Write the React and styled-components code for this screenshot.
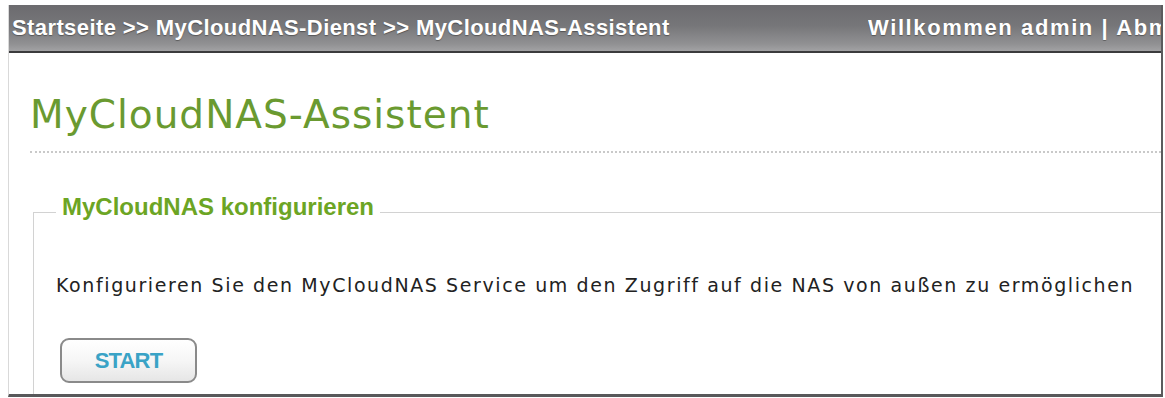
import styled, { createGlobalStyle } from "styled-components";

const GlobalStyle = createGlobalStyle`
  html, body {
    margin: 0;
    padding: 0;
    background: #fff;
  }
  body {
    font-family: "Liberation Sans", Arial, sans-serif;
  }
`;

const Frame = styled.div`
  box-sizing: border-box;
  margin: 5px 0 0 8px;
  width: 1155px;
  height: 392px;
  border-left: 1px solid #d9d9d9;
  border-right: 2px solid #5b5b5d;
  border-bottom: 3px solid #58585a;
  overflow: hidden;
  background: #fff;
`;

const TopBar = styled.div`
  display: flex;
  align-items: center;
  justify-content: space-between;
  height: 46px;
  padding-left: 3px;
  border-bottom: 2px solid #3b3b3d;
  background: linear-gradient(#6c6b6f, #767679 45%, #919193 85%, #a2a2a4);
  color: #fff;
  font-weight: bold;
  font-size: 22px;
  letter-spacing: 0.4px;
  white-space: nowrap;
  overflow: hidden;
  text-shadow: 0 1px 1px rgba(0, 0, 0, 0.35);
`;

const Crumbs = styled.div`
  flex-shrink: 0;
`;

const UserArea = styled.div`
  flex-shrink: 0;
  width: 293px;
  overflow: hidden;
  letter-spacing: 1.6px;
`;

const Title = styled.h1`
  margin: 39px 0 0 21px;
  font-family: "DejaVu Sans", Verdana, sans-serif;
  font-weight: normal;
  font-size: 39px;
  line-height: 46px;
  letter-spacing: 1px;
  color: #6a9a30;
`;

const Divider = styled.div`
  margin: 13px 0 0 21px;
  border-top: 2px dotted #c9c9c9;
`;

const Group = styled.fieldset`
  margin: 40px -60px 0 24px;
  padding: 0 0 60px 22px;
  border: 1px solid #d2d2d2;
  min-width: 0;
`;

const Legend = styled.legend`
  padding: 0 6px 10px;
  font-weight: bold;
  font-size: 24px;
  line-height: 28px;
  color: #6ca524;
`;

const Description = styled.p`
  margin: 42px 0 0;
  font-family: "DejaVu Sans", Verdana, sans-serif;
  font-size: 19px;
  line-height: 24px;
  letter-spacing: 1.6px;
  color: #222;
  white-space: nowrap;
`;

const StartButton = styled.button`
  display: block;
  margin: 41px 0 0 4px;
  width: 137px;
  height: 45px;
  border: 2px solid #8a8a8a;
  border-radius: 9px;
  background: linear-gradient(#ffffff, #f6f6f6 50%, #e6e6e6);
  color: #3aa3c6;
  font-family: "Liberation Sans", Arial, sans-serif;
  font-weight: bold;
  font-size: 22px;
  letter-spacing: -0.8px;
  cursor: pointer;
`;

export default function App() {
  return (
    <>
      <GlobalStyle />
      <Frame>
        <TopBar>
          <Crumbs>Startseite &gt;&gt; MyCloudNAS-Dienst &gt;&gt; MyCloudNAS-Assistent</Crumbs>
          <UserArea>Willkommen admin | Abmelden</UserArea>
        </TopBar>
        <Title>MyCloudNAS-Assistent</Title>
        <Divider />
        <Group>
          <Legend>MyCloudNAS konfigurieren</Legend>
          <Description>
            Konfigurieren Sie den MyCloudNAS Service um den Zugriff auf die NAS von außen zu ermöglichen
          </Description>
          <StartButton>START</StartButton>
        </Group>
      </Frame>
    </>
  );
}
